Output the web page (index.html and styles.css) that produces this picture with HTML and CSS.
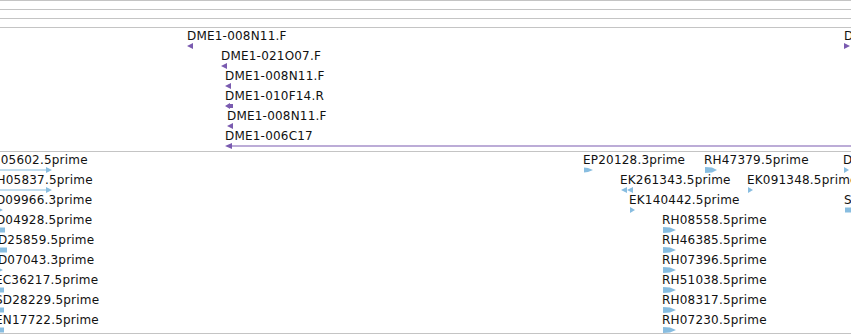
FILE: index.html
```html
<!DOCTYPE html>
<html lang="en">
<head>
  <meta charset="UTF-8" />
  <title>Track view</title>
  <link rel="stylesheet" href="styles.css">
</head>
<body>
  <div class="rule"></div>
  <div class="rule"></div>
  <div class="rule"></div>

  <!-- track 1: purple reads -->
  <div class="track track-top">
    <div class="feat" style="left:187px;top:0px">
      <span class="lbl">DME1-008N11.F</span>
      <svg class="glyph purple" width="6" height="6"><polygon points="0,3 6,0 6,6"/></svg>
    </div>
    <div class="feat" style="left:221px;top:20px">
      <span class="lbl">DME1-021O07.F</span>
      <svg class="glyph purple" width="6" height="6"><polygon points="0,3 6,0 6,6"/></svg>
    </div>
    <div class="feat" style="left:225px;top:40px">
      <span class="lbl">DME1-008N11.F</span>
      <svg class="glyph purple" width="6" height="6"><polygon points="0,3 6,0 6,6"/></svg>
    </div>
    <div class="feat" style="left:225px;top:60px">
      <span class="lbl">DME1-010F14.R</span>
      <svg class="glyph purple" width="8" height="6"><polygon points="0,3 5,0 5,1 8,1 8,5 5,5 5,6"/></svg>
    </div>
    <div class="feat" style="left:227px;top:80px">
      <span class="lbl">DME1-008N11.F</span>
      <svg class="glyph purple" width="6" height="6"><polygon points="0,3 6,0 6,6"/></svg>
    </div>
    <div class="feat" style="left:225px;top:100px">
      <span class="lbl">DME1-006C17</span>
      <svg class="glyph purple" width="630" height="6"><polygon points="0,3 7,0 7,6"/><rect x="6" y="2.5" width="624" height="1"/></svg>
    </div>
    <div class="feat" style="left:844px;top:0px">
      <span class="lbl">DME1-004A02.F</span>
      <svg class="glyph purple" width="6" height="6"><polygon points="0,0 6,3 0,6"/></svg>
    </div>
  </div>

  <!-- track 2: blue ESTs -->
  <div class="track track-bottom">
    <div class="feat" style="left:-17px;top:0px">
      <span class="lbl">RH05602.5prime</span>
      <svg class="glyph blue" width="70" height="6"><rect x="0" y="2.5" width="64" height="1"/><polygon points="63,0 69,3 63,6"/></svg>
    </div>
    <div class="feat" style="left:-12px;top:20px">
      <span class="lbl">RH05837.5prime</span>
      <svg class="glyph blue" width="66" height="6"><rect x="0" y="2.5" width="59" height="1"/><polygon points="58,0 64,3 58,6"/></svg>
    </div>
    <div class="feat" style="left:-11px;top:40px">
      <span class="lbl">LD09966.3prime</span>
      <svg class="glyph blue" width="16" height="6"><polygon points="8,0 14,3 8,6"/></svg>
    </div>
    <div class="feat" style="left:-11px;top:60px">
      <span class="lbl">LD04928.5prime</span>
      <svg class="glyph blue" width="16" height="6"><rect x="0" y="0.5" width="16" height="5"/></svg>
    </div>
    <div class="feat" style="left:-9px;top:80px">
      <span class="lbl">LD25859.5prime</span>
      <svg class="glyph blue" width="16" height="6"><rect x="0" y="0.5" width="16" height="5"/></svg>
    </div>
    <div class="feat" style="left:-9px;top:100px">
      <span class="lbl">LD07043.3prime</span>
      <svg class="glyph blue" width="14" height="6"><polygon points="6,0 12,3 6,6"/></svg>
    </div>
    <div class="feat" style="left:-5px;top:120px">
      <span class="lbl">EC36217.5prime</span>
      <svg class="glyph blue" width="9" height="6"><rect x="0" y="0.5" width="9" height="5"/></svg>
    </div>
    <div class="feat" style="left:-5px;top:140px">
      <span class="lbl">SD28229.5prime</span>
      <svg class="glyph blue" width="9" height="6"><rect x="0" y="0.5" width="9" height="5"/></svg>
    </div>
    <div class="feat" style="left:-5px;top:160px">
      <span class="lbl">EN17722.5prime</span>
      <svg class="glyph blue" width="9" height="6"><rect x="0" y="0.5" width="9" height="5"/></svg>
    </div>

    <div class="feat" style="left:583px;top:0px">
      <span class="lbl">EP20128.3prime</span>
      <svg class="glyph blue" width="10" height="6"><polygon points="1,0.5 5,1 10,3 5,5 1,5.5"/></svg>
    </div>
    <div class="feat" style="left:704px;top:0px">
      <span class="lbl">RH47379.5prime</span>
      <svg class="glyph blue" width="13" height="6"><polygon points="1,0 8,0.5 13,3 8,5.5 1,6"/></svg>
    </div>
    <div class="feat" style="left:843px;top:0px">
      <span class="lbl">DE10235.5prime</span>
      <svg class="glyph blue" width="7" height="6"><polygon points="1,0 6,3 1,6"/></svg>
    </div>
    <div class="feat" style="left:620px;top:20px">
      <span class="lbl">EK261343.5prime</span>
      <svg class="glyph blue" width="14" height="6"><polygon points="1,3 7,0 7,6"/><polygon points="7,3 13,0 13,6"/></svg>
    </div>
    <div class="feat" style="left:747px;top:20px">
      <span class="lbl">EK091348.5prime</span>
      <svg class="glyph blue" width="7" height="6"><polygon points="1,0 6,3 1,6"/></svg>
    </div>
    <div class="feat" style="left:629px;top:40px">
      <span class="lbl">EK140442.5prime</span>
      <svg class="glyph blue" width="7" height="6"><polygon points="1,0 6,3 1,6"/></svg>
    </div>
    <div class="feat" style="left:844px;top:40px">
      <span class="lbl">SD10582.5prime</span>
      <svg class="glyph blue" width="10" height="6"><rect x="1" y="0.5" width="9" height="5"/></svg>
    </div>
    <div class="feat" style="left:662px;top:60px">
      <span class="lbl">RH08558.5prime</span>
      <svg class="glyph blue" width="14" height="6"><polygon points="1,0 8,0.5 14,3 8,5.5 1,6"/></svg>
    </div>
    <div class="feat" style="left:662px;top:80px">
      <span class="lbl">RH46385.5prime</span>
      <svg class="glyph blue" width="14" height="6"><polygon points="1,0 8,0.5 14,3 8,5.5 1,6"/></svg>
    </div>
    <div class="feat" style="left:662px;top:100px">
      <span class="lbl">RH07396.5prime</span>
      <svg class="glyph blue" width="14" height="6"><polygon points="1,0 8,0.5 14,3 8,5.5 1,6"/></svg>
    </div>
    <div class="feat" style="left:662px;top:120px">
      <span class="lbl">RH51038.5prime</span>
      <svg class="glyph blue" width="14" height="6"><polygon points="1,0 8,0.5 14,3 8,5.5 1,6"/></svg>
    </div>
    <div class="feat" style="left:662px;top:140px">
      <span class="lbl">RH08317.5prime</span>
      <svg class="glyph blue" width="14" height="6"><polygon points="1,0 8,0.5 14,3 8,5.5 1,6"/></svg>
    </div>
    <div class="feat" style="left:662px;top:160px">
      <span class="lbl">RH07230.5prime</span>
      <svg class="glyph blue" width="14" height="6"><polygon points="1,0 8,0.5 14,3 8,5.5 1,6"/></svg>
    </div>
  </div>
</body>
</html>
```

FILE: styles.css
```css
* {
  box-sizing: border-box;
}
body {
  margin: 0;
  width: 851px;
  height: 335px;
  overflow: hidden;
  background: #fff;
  font-family: "DejaVu Sans", sans-serif;
  color: #111;
}
.rule {
  height: 9px;
  border-top: 1px solid #c4c4c4;
}

/* tracks */
.track {
  position: relative;
  overflow: hidden;
  border-top: 1px solid #c4c4c4;
}
.track-top {
  height: 124px;
}
.track-bottom {
  height: 183px;
  border-bottom: 1px solid #c4c4c4;
}

/* features */
.feat {
  position: absolute;
  display: flex;
  flex-direction: column;
  align-items: flex-start;
}
.lbl {
  font-size: 12px;
  line-height: 14px;
  letter-spacing: 0.2px;
  padding-top: 1px;
  white-space: nowrap;
}
.glyph {
  display: block;
}
.purple {
  fill: #7a5bb0;
}
.blue {
  fill: #88bde0;
}
```
